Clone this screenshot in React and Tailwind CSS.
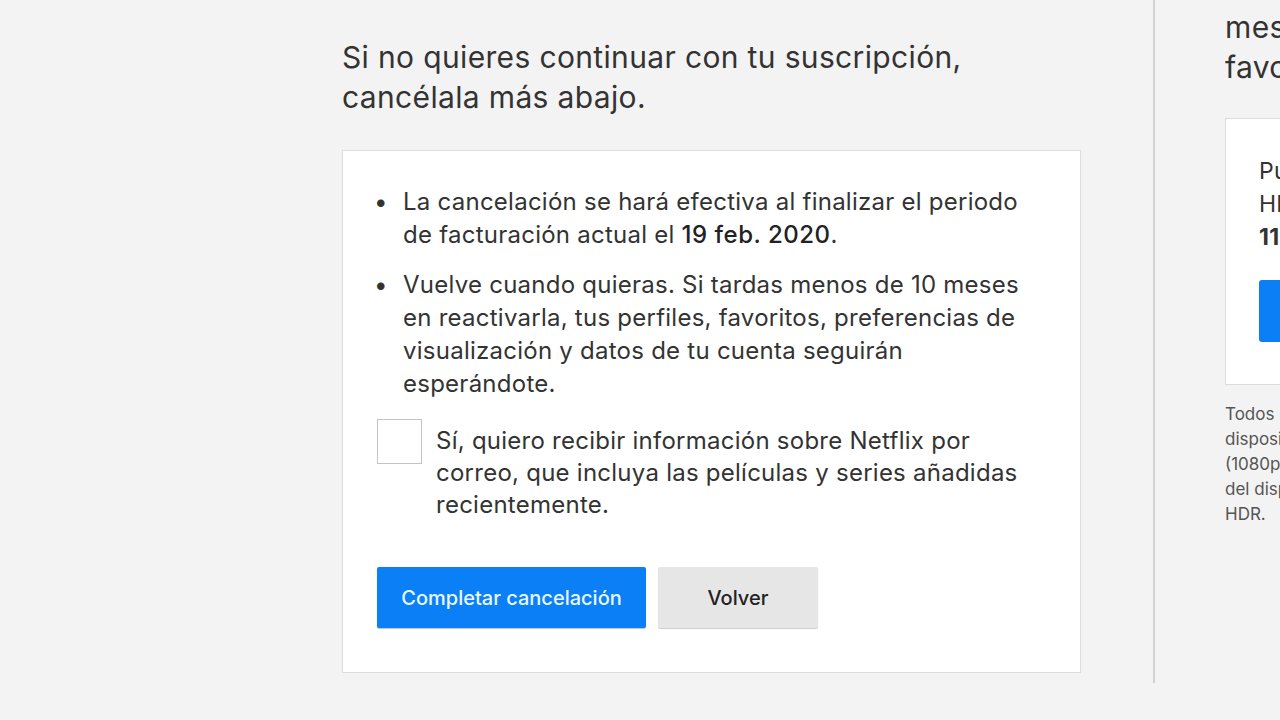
export default function App() {
  const font = { fontFamily: "Inter, 'Noto Sans', Arial, sans-serif" };
  return (
    <div className="w-[1280px] h-[720px] overflow-hidden bg-[#f3f3f3] flex text-[#333]" style={font}>
      <div className="ml-[342px] w-[739px] shrink-0 pt-[37px]">
        <h2 className="text-[30px] leading-[40px] font-normal tracking-[0.35px] text-[#333] whitespace-nowrap">
          Si no quieres continuar con tu suscripción,<br />cancélala más abajo.
        </h2>
        <div className="mt-[33px] bg-white border border-[#dcdcdc] h-[523px] pl-[34px] pr-[20px] pt-[34px]">
          <ul className="flex flex-col gap-[17px] text-[24px] leading-[33px] tracking-[0.25px] whitespace-nowrap">
            <li className="flex">
              <span className="w-[30px] -ml-[4px] shrink-0 pl-[1px]">•</span>
              <span>La cancelación se hará efectiva al finalizar el periodo<br />de facturación actual el <b className="font-medium text-[#222] tracking-[0.5px]">19 feb. 2020</b>.</span>
            </li>
            <li className="flex">
              <span className="w-[30px] -ml-[4px] shrink-0 pl-[1px]">•</span>
              <span>Vuelve cuando quieras. Si tardas menos de 10 meses<br />en reactivarla, tus perfiles, favoritos, preferencias de<br />visualización y datos de tu cuenta seguirán<br />esperándote.</span>
            </li>
          </ul>
          <div className="flex mt-[19px]">
            <div className="w-[45px] h-[45px] shrink-0 border border-[#c4c4c4] bg-white" />
            <p className="ml-[14px] mt-[6px] text-[24px] leading-[32px] tracking-[0.25px] whitespace-nowrap">
              Sí, quiero recibir información sobre Netflix por<br />correo, que incluya las películas y series añadidas<br />recientemente.
            </p>
          </div>
          <div className="flex gap-[12px] mt-[46px]">
            <button className="w-[269px] h-[61px] bg-[#0b80f6] rounded-[2px] text-[#e8f6ff] text-[20px] font-medium shadow-[0_1px_1px_rgba(0,0,0,0.25)]">
              Completar cancelación
            </button>
            <button className="w-[160px] h-[61px] bg-[#e6e6e6] rounded-[2px] text-[#222] text-[20px] font-medium shadow-[0_1px_1px_rgba(0,0,0,0.2)]">
              Volver
            </button>
          </div>
        </div>
      </div>
      <div className="ml-[72px] w-[2px] h-[683px] bg-[#d2d2d2] shrink-0" />
      <div className="ml-[70px] flex-1 overflow-hidden">
        <div className="pt-[7px] text-[30px] leading-[40px] tracking-[0.35px] whitespace-nowrap">
          <div>meses, tus perfiles</div>
          <div>favoritos</div>
        </div>
        <div className="mt-[31px] w-[300px] h-[267px] bg-white border border-[#dcdcdc] pl-[33px] pt-[36px]">
          <div className="text-[23px] leading-[33px] tracking-[0.25px] whitespace-nowrap">
            <div>Puedes cambiar</div>
            <div>HD</div>
            <div className="font-bold">11,99 €</div>
          </div>
          <div className="mt-[26px] w-[240px] h-[62px] bg-[#0b80f6] rounded-[3px]" />
        </div>
        <div className="mt-[17px] text-[17px] leading-[25px] text-[#555] whitespace-nowrap">
          <div>Todos los planes</div>
          <div>dispositivos</div>
          <div>(1080p)</div>
          <div>del dispositivo</div>
          <div>HDR.</div>
        </div>
      </div>
    </div>
  );
}
